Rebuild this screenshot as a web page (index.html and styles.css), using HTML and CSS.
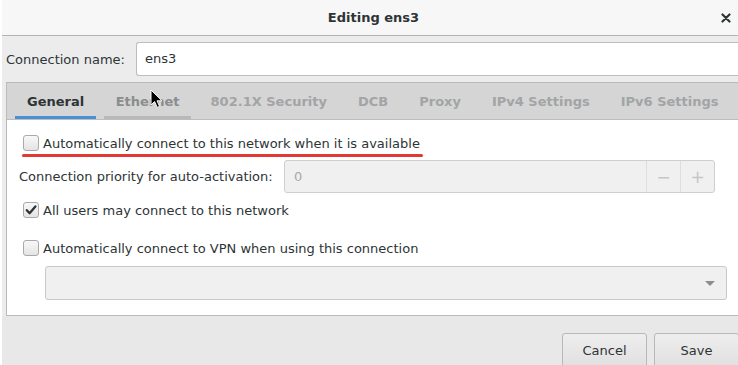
FILE: index.html
```html
<!DOCTYPE html>
<html>
<head>
<meta charset="utf-8">
<link rel="stylesheet" href="styles.css">
</head>
<body>
<div class="dialog">
  <div class="titlebar">
    <span class="title">Editing ens3</span>
    <span class="close"><svg width="10" height="10" viewBox="0 0 10 10"><path d="M1.5 1.5 L8.5 8.5 M8.5 1.5 L1.5 8.5" stroke="#2e3436" stroke-width="2.2" stroke-linecap="round"/></svg></span>
  </div>
  <div class="main">
    <div class="name-row">
      <span class="label">Connection name:</span>
      <div class="entry">ens3</div>
    </div>
    <div class="notebook">
      <div class="tabs">
        <div class="tab active">General</div>
        <div class="tab hover">Ethernet</div>
        <div class="tab">802.1X Security</div>
        <div class="tab">DCB</div>
        <div class="tab">Proxy</div>
        <div class="tab">IPv4 Settings</div>
        <div class="tab">IPv6 Settings</div>
      </div>
      <div class="page">
        <div class="check-row first">
          <span class="check"></span>
          <span>Automatically connect to this network when it is available</span>
          <span class="annot"></span>
        </div>
        <div class="prio-row">
          <span class="label">Connection priority for auto-activation:</span>
          <div class="spin">
            <span class="spin-val">0</span>
            <span class="spin-btn">−</span>
            <span class="spin-btn">+</span>
          </div>
        </div>
        <div class="check-row second">
          <span class="check checked"><svg width="14" height="14" viewBox="0 0 14 14"><path d="M2.8 7.2 L5.6 10.2 L11.4 3.4" fill="none" stroke="#2e3436" stroke-width="2.3" stroke-linecap="round" stroke-linejoin="round"/></svg></span>
          <span>All users may connect to this network</span>
        </div>
        <div class="check-row third">
          <span class="check"></span>
          <span>Automatically connect to VPN when using this connection</span>
        </div>
        <div class="combo"><span class="arrow"></span></div>
      </div>
    </div>
  </div>
  <div class="actions">
    <div class="btn">Cancel</div>
    <div class="btn">Save</div>
  </div>
  <svg class="cursor" width="14" height="20" viewBox="0 0 14 20"><path d="M1 1 L1 16 L4.6 12.6 L7.2 18.4 L9.6 17.4 L7 11.8 L12 11.8 Z" fill="#000" stroke="#fff" stroke-width="1"/></svg>
</div>
</body>
</html>
```

FILE: styles.css
```css
html, body {
  margin: 0;
  padding: 0;
  background: #ffffff;
}
body {
  font-family: "DejaVu Sans", sans-serif;
  font-size: 13px;
  color: #2e3436;
}
.dialog {
  position: relative;
  margin-left: 2px;
  width: 736px;
  height: 365px;
  background: #ececec;
  display: flex;
  flex-direction: column;
  overflow: hidden;
}
.titlebar {
  height: 35px;
  flex: none;
  background: #f7f7f7;
  border-bottom: 1px solid #b4b4b4;
  display: flex;
  align-items: center;
  justify-content: center;
  position: relative;
}
.title {
  font-weight: bold;
  margin-left: 7px;
}
.close {
  position: absolute;
  right: 7px;
  top: 13px;
  width: 10px;
  height: 10px;
  display: flex;
}
.main {
  flex: 1;
  padding: 6px 0 0 4px;
  display: flex;
  flex-direction: column;
}
.name-row {
  display: flex;
  align-items: center;
  height: 34px;
}
.name-row .label {
  width: 130px;
  flex: none;
}
.entry {
  flex: 1;
  box-sizing: border-box;
  background: #ffffff;
  border: 1px solid #bdbdbd;
  border-right: none;
  border-radius: 3px 0 0 3px;
  padding-left: 8px;
  padding-bottom: 1px;
  display: flex;
  align-items: center;
  height: 34px;
}
.notebook {
  margin-top: 6px;
  border: 1px solid #bababa;
  border-right: none;
  display: flex;
  flex-direction: column;
}
.tabs {
  background: #d5d5d5;
  border-bottom: 1px solid #bdbdbd;
  display: flex;
  padding-left: 4px;
  box-sizing: border-box;
  height: 37px;
}
.tab {
  margin: 0 4px;
  padding: 0 11.5px;
  font-weight: bold;
  color: #a2a4a5;
  display: flex;
  align-items: center;
  border-bottom: 3px solid transparent;
  padding-top: 3px;
  white-space: nowrap;
}
.tab.active {
  color: #2e3436;
  border-bottom-color: #4a90d9;
  padding-left: 12px;
  padding-right: 12px;
}
.tab.hover {
  color: #8a8c8d;
  border-bottom-color: #b9b9b9;
}
.page {
  background: #ffffff;
  height: 195px;
  box-sizing: border-box;
  display: flex;
  flex-direction: column;
}
.check-row {
  display: flex;
  align-items: center;
  height: 20px;
  padding-left: 16px;
  position: relative;
}
.check-row.first { margin-top: 13px; }
.check-row.second { margin-top: 7px; }
.check-row.third { margin-top: 18px; }
.check {
  width: 16px;
  height: 16px;
  box-sizing: border-box;
  border: 1px solid #a9a9a9;
  border-radius: 3px;
  background: linear-gradient(#f8f8f8, #e4e4e4);
  margin-right: 4px;
  flex: none;
  display: flex;
  align-items: center;
  justify-content: center;
}
.annot {
  position: absolute;
  left: 15px;
  top: 21px;
  width: 401px;
  height: 3px;
  border-radius: 2px;
  background: #e03a35;
}
.prio-row {
  display: flex;
  align-items: center;
  margin-top: 7px;
  padding-left: 12px;
  height: 33px;
}
.prio-row .label {
  width: 265px;
  flex: none;
}
.spin {
  width: 431px;
  height: 33px;
  box-sizing: border-box;
  background: #f0f0f0;
  border: 1px solid #cfcfcf;
  border-radius: 3px;
  display: flex;
  align-items: stretch;
}
.spin-val {
  flex: 1;
  color: #a8a8a8;
  padding-left: 9px;
  display: flex;
  align-items: center;
}
.spin-btn {
  width: 33px;
  border-left: 1px solid #dedede;
  color: #c6c6c6;
  font-size: 17px;
  display: flex;
  align-items: center;
  justify-content: center;
}
.combo {
  margin: 8px 0 0 38px;
  width: 682px;
  height: 34px;
  box-sizing: border-box;
  background: #f0f0f0;
  border: 1px solid #c9c9c9;
  border-radius: 3px;
  display: flex;
  align-items: center;
  justify-content: flex-end;
  padding-right: 11px;
}
.arrow {
  width: 0;
  height: 0;
  border-left: 5px solid transparent;
  border-right: 5px solid transparent;
  border-top: 5px solid #8d8d8d;
}
.actions {
  height: 50px;
  flex: none;
  display: flex;
  justify-content: flex-end;
  align-items: flex-start;
  padding-top: 17px;
  box-sizing: border-box;
  gap: 7px;
  margin-right: -1px;
  background: #e8e8e8;
}
.btn {
  width: 85px;
  height: 35px;
  box-sizing: border-box;
  border: 1px solid #b8b8b8;
  border-radius: 3px;
  background: linear-gradient(#eeeeee, #e0e0e0);
  display: flex;
  align-items: center;
  justify-content: center;
}
.cursor {
  position: absolute;
  left: 148px;
  top: 89px;
}
```
